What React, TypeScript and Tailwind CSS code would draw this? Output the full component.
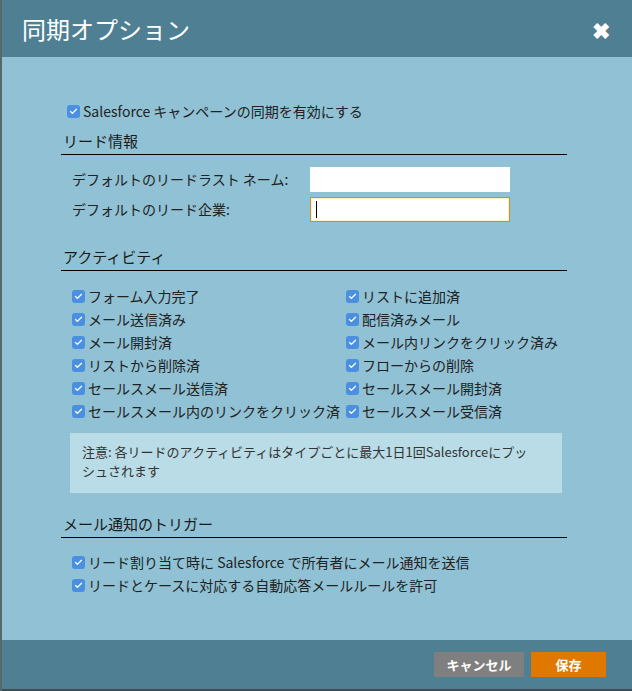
import { Check } from "lucide-react";

const leftItems = [
  "フォーム入力完了",
  "メール送信済み",
  "メール開封済",
  "リストから削除済",
  "セールスメール送信済",
  "セールスメール内のリンクをクリック済",
];

const rightItems = [
  "リストに追加済",
  "配信済みメール",
  "メール内リンクをクリック済み",
  "フローからの削除",
  "セールスメール開封済",
  "セールスメール受信済",
];

function Box() {
  return (
    <span className="flex h-[13px] w-[13px] shrink-0 items-center justify-center rounded-[3px] bg-[#4a8fe0]">
      <Check size={9} strokeWidth={3.5} className="text-white" />
    </span>
  );
}

function CheckRow({ label }: { label: string }) {
  return (
    <label className="flex h-[23px] items-center gap-[3px] text-[14px] text-[#222]">
      <Box />
      <span>{label}</span>
    </label>
  );
}

function Section({ title }: { title: string }) {
  return (
    <div className="border-b border-black pb-[2px] pl-[2px] text-[15px] leading-[22px] text-[#1a1a1a]">
      {title}
    </div>
  );
}

export default function App() {
  return (
    <div
      className="flex h-[691px] w-[632px] flex-col border-l-2 border-[#5b666b] bg-[#90c1d4]"
      style={{ fontFamily: '"Noto Sans CJK JP", "Noto Sans", sans-serif' }}
    >
      <div className="flex h-[57px] shrink-0 items-center justify-between bg-[#4f7f93] pl-[20px] pr-[22px]">
        <h1 className="text-[24px] font-normal text-white">同期オプション</h1>
        <span className="text-[22px] font-bold leading-none text-white">✖</span>
      </div>

      <div className="flex-1 px-[59px] pt-[43px]">
        <div className="pl-[6px]">
          <CheckRow label="Salesforce キャンペーンの同期を有効にする" />
        </div>

        <div className="mt-[7px] w-[506px]">
          <Section title="リード情報" />
          <div className="mt-[12px] flex flex-col gap-[5px] pl-[11px]">
            <div className="flex items-center">
              <span className="w-[238px] text-[14px] text-[#222]">デフォルトのリードラスト ネーム:</span>
              <input className="h-[25px] w-[200px] bg-white px-[5px] outline-none" />
            </div>
            <div className="flex items-center">
              <span className="w-[238px] text-[14px] text-[#222]">デフォルトのリード企業:</span>
              <div className="flex h-[25px] w-[200px] items-center border border-[#c79030] bg-white px-[5px] shadow-[inset_0_0_0_1px_#fff3c8]">
                <span className="h-[17px] w-[1px] bg-black" />
              </div>
            </div>
          </div>
        </div>

        <div className="mt-[24px] w-[506px]">
          <Section title="アクティビティ" />
          <div className="mt-[14px] grid grid-cols-[274px_1fr] pl-[11px]">
            <div>
              {leftItems.map((t) => (
                <CheckRow key={t} label={t} />
              ))}
            </div>
            <div>
              {rightItems.map((t) => (
                <CheckRow key={t} label={t} />
              ))}
            </div>
          </div>
          <div className="ml-[9px] mt-[10px] h-[60px] w-[492px] bg-[#b9dce6] pl-[12px] pr-[26px] pt-[9px] text-[13px] leading-[19px] text-[#333]">
            注意: 各リードのアクティビティはタイプごとに最大1日1回Salesforceにプッシュされます
          </div>
        </div>

        <div className="mt-[20px] w-[506px]">
          <Section title="メール通知のトリガー" />
          <div className="mt-[13px] pl-[11px]">
            <CheckRow label="リード割り当て時に Salesforce で所有者にメール通知を送信" />
            <CheckRow label="リードとケースに対応する自動応答メールルールを許可" />
          </div>
        </div>
      </div>

      <div className="flex h-[51px] shrink-0 items-start justify-end gap-[7px] border-b-2 border-[#3f4c52] bg-[#4f7f93] pr-[26px] pt-[12px]">
        <button className="h-[25px] w-[90px] bg-[#7f7f7f] text-[13px] font-bold text-white">キャンセル</button>
        <button className="h-[25px] w-[75px] bg-[#e07800] text-[13px] font-bold text-white">保存</button>
      </div>
    </div>
  );
}
